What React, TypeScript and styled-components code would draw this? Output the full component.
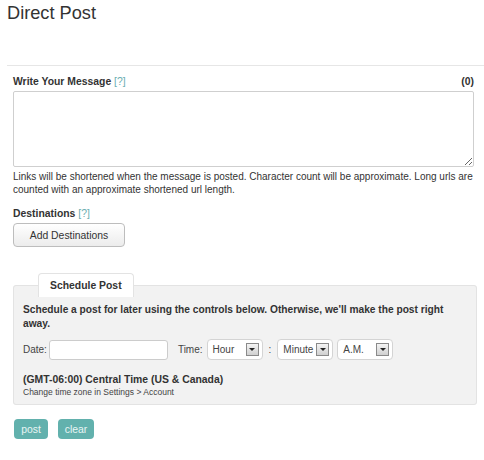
import styled, { createGlobalStyle } from "styled-components";

const GlobalStyle = createGlobalStyle`
  body {
    margin: 0;
    background: #fff;
    font-family: "Liberation Sans", Arial, sans-serif;
    color: #333;
  }
`;

const Page = styled.div`
  width: 484px;
  padding: 0 0 0 7px;
  box-sizing: border-box;
`;

const Title = styled.h1`
  margin: 0;
  padding-top: 3px;
  height: 62px;
  font-size: 18.2px;
  font-weight: normal;
  color: #333;
  border-bottom: 1px solid #e6e6e6;
`;

const Body = styled.div`
  padding: 10px 10px 0 6px;
`;

const LabelRow = styled.div`
  display: flex;
  justify-content: space-between;
  align-items: flex-end;
  font-size: 10.4px;
  font-weight: bold;
  color: #333;
  margin-bottom: 4px;
`;

const Help = styled.span`
  color: #6aaeb1;
  font-weight: normal;
`;

const Message = styled.textarea`
  display: block;
  box-sizing: border-box;
  width: 461px;
  height: 76px;
  border: 1px solid #cfcfcf;
  border-radius: 2px;
  resize: vertical;
  margin: 0;
`;

const Note = styled.p`
  margin: 3px 0 0;
  font-size: 10px;
  line-height: 13px;
  color: #333;
`;

const Section = styled.div`
  margin-top: 12px;
`;

const Label = styled.div`
  font-size: 10.4px;
  font-weight: bold;
  margin-bottom: 4px;
`;

const GrayButton = styled.button`
  font-family: inherit;
  font-size: 10.4px;
  color: #333;
  width: 112px;
  height: 24px;
  border: 1px solid #bdbdbd;
  border-radius: 4px;
  background: linear-gradient(#fff, #ececec);
  padding: 0;
`;

const Fieldset = styled.fieldset`
  margin: 26px 0 0;
  width: 464px;
  box-sizing: border-box;
  border: 1px solid #e3e3e3;
  border-radius: 3px;
  background: #f2f2f2;
  padding: 0 9px 7px 9px;
`;

const Legend = styled.legend`
  margin-left: 15px;
  padding: 6px 11px;
  white-space: nowrap;
  background: #fff;
  border: 1px solid #e3e3e3;
  border-bottom: none;
  border-radius: 4px 4px 0 0;
  font-size: 10.4px;
  font-weight: bold;
  color: #333;
`;

const Lead = styled.p`
  margin: 6px 0 0;
  font-size: 10.2px;
  line-height: 14px;
  font-weight: bold;
  color: #333;
`;

const TimeRow = styled.div`
  display: flex;
  align-items: center;
  gap: 4px;
  margin-top: 8px;
  font-size: 10px;
  color: #444;
`;

const DateInput = styled.input`
  box-sizing: border-box;
  width: 119px;
  height: 20px;
  border: 1px solid #ccc;
  border-radius: 3px;
  background: #fff;
  margin: 0 6px 0 -2px;
`;

const Select = styled.div<{ $w: number }>`
  box-sizing: border-box;
  width: ${p => p.$w}px;
  height: 21px;
  display: flex;
  align-items: center;
  justify-content: space-between;
  padding: 0 3px 0 5px;
  border: 1px solid #d4d4d4;
  border-radius: 4px;
  background: #fff;
  font-size: 10px;
  color: #444;
`;

const Arrow = styled.span`
  flex: none;
  width: 13px;
  height: 13px;
  box-sizing: border-box;
  border: 1px solid #8a8a8a;
  background: linear-gradient(#f4f4f4, #d0d0d0);
  display: flex;
  align-items: center;
  justify-content: center;
  &::after {
    content: "";
    border-left: 3px solid transparent;
    border-right: 3px solid transparent;
    border-top: 3px solid #222;
  }
`;

const Colon = styled.span`
  margin: 0 2px;
`;

const Zone = styled.div`
  margin-top: 14px;
  font-size: 10.4px;
  font-weight: bold;
`;

const ZoneHint = styled.div`
  margin-top: 2px;
  font-size: 8.5px;
  color: #444;
`;

const Actions = styled.div`
  display: flex;
  gap: 10px;
  margin-top: 14px;
  padding-left: 1px;
`;

const TealButton = styled.button<{ $w: number }>`
  font-family: inherit;
  font-size: 10.4px;
  color: #e8f5f4;
  background: #62b1ad;
  border: none;
  border-radius: 4px;
  width: ${p => p.$w}px;
  height: 20px;
  padding: 0;
`;

export default function App() {
  return (
    <Page>
      <GlobalStyle />
      <Title>Direct Post</Title>
      <Body>
        <LabelRow>
          <span>Write Your Message <Help>[?]</Help></span>
          <span>(0)</span>
        </LabelRow>
        <Message />
        <Note>
          Links will be shortened when the message is posted. Character count will be approximate. Long urls are
          counted with an approximate shortened url length.
        </Note>
        <Section>
          <Label>Destinations <Help>[?]</Help></Label>
          <GrayButton>Add Destinations</GrayButton>
        </Section>
        <Fieldset>
          <Legend>Schedule Post</Legend>
          <Lead>Schedule a post for later using the controls below. Otherwise, we'll make the post right away.</Lead>
          <TimeRow>
            <span>Date:</span>
            <DateInput />
            <span>Time:</span>
            <Select $w={56}>Hour<Arrow /></Select>
            <Colon>:</Colon>
            <Select $w={56}>Minute<Arrow /></Select>
            <Select $w={56}>A.M.<Arrow /></Select>
          </TimeRow>
          <Zone>(GMT-06:00) Central Time (US &amp; Canada)</Zone>
          <ZoneHint>Change time zone in Settings &gt; Account</ZoneHint>
        </Fieldset>
        <Actions>
          <TealButton $w={34}>post</TealButton>
          <TealButton $w={36}>clear</TealButton>
        </Actions>
      </Body>
    </Page>
  );
}
